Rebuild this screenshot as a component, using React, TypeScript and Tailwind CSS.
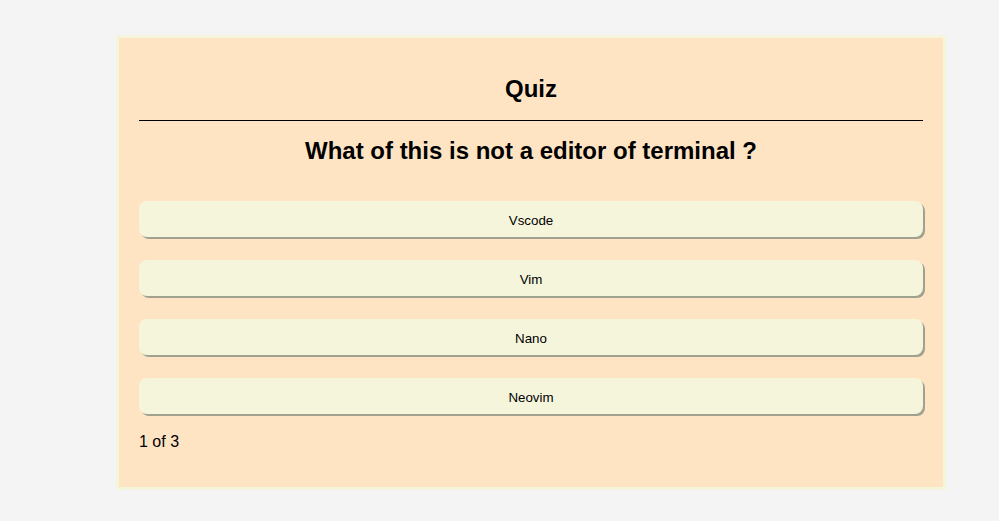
const options = ['Vscode', 'Vim', 'Nano', 'Neovim'];

export default function App() {
  return (
    <div className="min-h-[521px] bg-[#f4f4f4] pt-[35px] font-['Liberation_Sans',Arial,sans-serif] text-black">
      <div className="ml-[116px] w-[830px] h-[455px] border-[3px] border-[#f5f5dc] bg-[#ffe4c4] px-[20px] pt-[37px]">
        <h1 className="text-center text-[24px] leading-[28px] font-bold">Quiz</h1>
        <hr className="mt-[17px] border-0 border-t border-black" />
        <h2 className="mt-[16px] text-center text-[24px] leading-[28px] font-bold">
          What of this is not a editor of terminal ?
        </h2>
        <div className="mt-[36px] flex flex-col gap-[23px]">
          {options.map((opt) => (
            <button
              key={opt}
              className="h-[36px] w-full rounded-[8px] bg-[#f5f5dc] pt-[3px] text-[13.33px] leading-[16px] shadow-[2px_2px_0_0_#a1a18f]"
            >
              {opt}
            </button>
          ))}
        </div>
        <p className="mt-[16px] text-[16px] leading-[24px]">1 of 3</p>
      </div>
    </div>
  );
}
